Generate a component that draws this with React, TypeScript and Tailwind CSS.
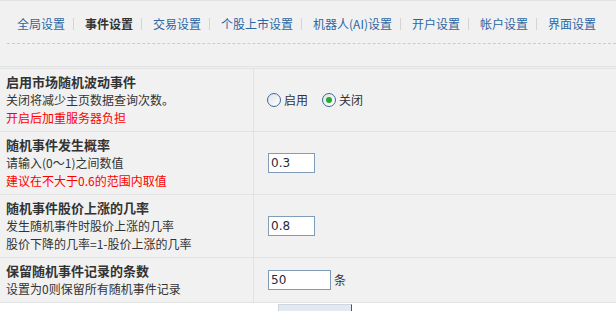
import React from "react"

const tabs = ["全局设置", "事件设置", "交易设置", "个股上市设置", "机器人(AI)设置", "开户设置", "帐户设置", "界面设置"]

function Radio({ checked, label }: { checked?: boolean; label: string }) {
  return (
    <label className="flex items-center mr-[14px]">
      <span className="w-[14px] h-[14px] rounded-full border border-[#3b6a97] bg-gradient-to-br from-[#dfe4ea] to-white flex items-center justify-center">
        {checked && <span className="w-[6px] h-[6px] rounded-full bg-[#29a829]" />}
      </span>
      <span className="ml-[3px] text-[12px] text-[#333]">{label}</span>
    </label>
  )
}

function Row({
  title,
  lines,
  children,
}: {
  title: string
  lines: { text: string; red?: boolean }[]
  children: React.ReactNode
}) {
  return (
    <div className="flex border-t border-[#e2e2e2]">
      <div className="w-[254px] shrink-0 border-r border-[#e2e2e2] pl-[6px] py-[4px] leading-[18px]">
        <div className="text-[13px] font-bold text-[#333]">{title}</div>
        {lines.map((l, i) => (
          <div key={i} className={`text-[12px] ${l.red ? "text-[#ff0000]" : "text-[#333]"}`}>
            {l.text}
          </div>
        ))}
      </div>
      <div className="flex-1 flex items-center pl-[13px]">{children}</div>
    </div>
  )
}

function Field({ value, w }: { value: string; w: string }) {
  return (
    <div
      className={`${w} h-[20px] border border-[#7f9db9] bg-white flex items-center pl-[2px] text-[12px] text-[#2a2a3a]`}
      style={{ fontFamily: '"DejaVu Sans", sans-serif' }}
    >
      {value}
    </div>
  )
}

export default function App() {
  return (
    <div
      className="w-[616px] h-[311px] overflow-hidden bg-[#f1f1f1] border-t border-[#e2e2e2]"
      style={{ fontFamily: '"Noto Sans CJK SC", "Liberation Sans", sans-serif' }}
    >
      {/* tabs */}
      <div className="flex items-center pl-[17px] pt-[14px] pb-[10px] leading-[18px] text-[12px]">
        {tabs.map((t, i) => (
          <div key={t} className="flex items-center">
            <span className={i === 1 ? "font-bold text-[#333]" : "text-[#2d66a3]"}>{t}</span>
            {i < tabs.length - 1 && <span className="ml-[8px] mr-[11px] w-[1px] h-[12px] bg-[#d4d4d4]" />}
          </div>
        ))}
      </div>
      <div className="ml-[7px] border-t border-dashed border-[#cccccc]" />

      <div className="mt-[22px] border-t border-[#e2e2e2] pt-[1px]">
        <Row
          title="启用市场随机波动事件"
          lines={[{ text: "关闭将减少主页数据查询次数。" }, { text: "开启后加重服务器负担", red: true }]}
        >
          <Radio label="启用" />
          <Radio label="关闭" checked />
        </Row>
        <Row
          title="随机事件发生概率"
          lines={[{ text: "请输入(0～1)之间数值" }, { text: "建议在不大于0.6的范围内取值", red: true }]}
        >
          <div className="pl-[1px]">
            <Field value="0.3" w="w-[47px]" />
          </div>
        </Row>
        <Row
          title="随机事件股价上涨的几率"
          lines={[{ text: "发生随机事件时股价上涨的几率" }, { text: "股价下降的几率=1-股价上涨的几率" }]}
        >
          <div className="pl-[1px]">
            <Field value="0.8" w="w-[47px]" />
          </div>
        </Row>
        <div className="border-b border-[#e2e2e2]">
          <Row title="保留随机事件记录的条数" lines={[{ text: "设置为0则保留所有随机事件记录" }]}>
            <div className="pl-[1px] flex items-center">
              <Field value="50" w="w-[63px]" />
              <span className="ml-[3px] text-[12px] text-[#333]">条</span>
            </div>
          </Row>
        </div>
      </div>

      <div className="bg-white h-[40px] pt-[1px]">
        <div className="ml-[278px] w-[74px] h-[24px] bg-[#e2e9f1] border-t border-l border-[#cdd6e0] border-r border-r-[#3d5a7c]" />
      </div>
    </div>
  )
}
